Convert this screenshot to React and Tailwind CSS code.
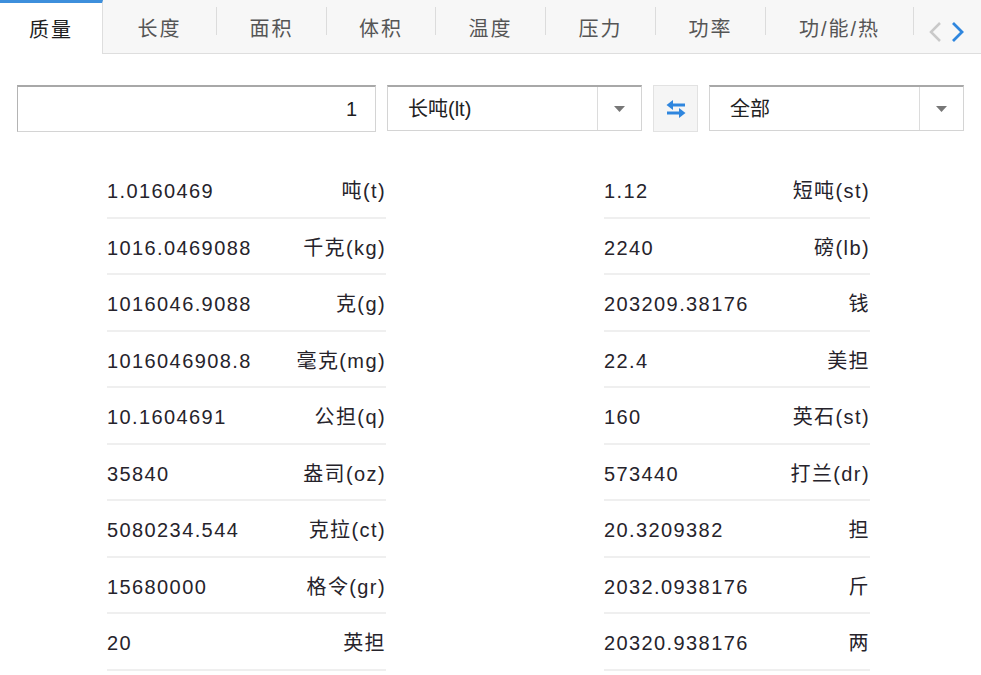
import React from "react";

const tabs = ["质量", "长度", "面积", "体积", "温度", "压力", "功率", "功/能/热"];
const tabWidths = ["w-[103px]", "w-[113px]", "w-[109px]", "w-[108px]", "w-[109px]", "w-[109px]", "w-[109px]", "w-[147px]"];

const left = [
  ["1.0160469", "吨(t)"],
  ["1016.0469088", "千克(kg)"],
  ["1016046.9088", "克(g)"],
  ["1016046908.8", "毫克(mg)"],
  ["10.1604691", "公担(q)"],
  ["35840", "盎司(oz)"],
  ["5080234.544", "克拉(ct)"],
  ["15680000", "格令(gr)"],
  ["20", "英担"],
];

const right = [
  ["1.12", "短吨(st)"],
  ["2240", "磅(lb)"],
  ["203209.38176", "钱"],
  ["22.4", "美担"],
  ["160", "英石(st)"],
  ["573440", "打兰(dr)"],
  ["20.3209382", "担"],
  ["2032.0938176", "斤"],
  ["20320.938176", "两"],
];

const Caret = () => (
  <svg width="11" height="6" viewBox="0 0 11 6">
    <path d="M0 0 L11 0 L5.5 6 Z" fill="#777" />
  </svg>
);

const Select = ({ label }) => (
  <div className="flex h-[46px] w-[255px] border border-[#d4d4d4] border-t-2 border-t-[#a8a8a8] bg-white">
    <div className="flex flex-1 items-center pl-[20px] text-[20px] text-[#222]">{label}</div>
    <div className="flex w-[44px] items-center justify-center border-l border-[#dcdcdc]">
      <Caret />
    </div>
  </div>
);

const Row = ({ value, unit }) => (
  <div className="flex h-[56.5px] items-center justify-between border-b-2 border-[#efefef] pt-[4px]">
    <span>{value}</span>
    <span>{unit}</span>
  </div>
);

export default function App() {
  return (
    <div
      className="h-[675px] w-[981px] overflow-hidden bg-white"
      style={{ fontFamily: '"Liberation Sans", "Noto Sans CJK SC", sans-serif' }}
    >
      {/* tab bar */}
      <div className="flex h-[54px] items-stretch border-b border-[#dedede] bg-[#f7f7f7]">
        {tabs.map((t, i) => (
          <React.Fragment key={t}>
            {i === 0 ? (
              <div className={`${tabWidths[i]} -mb-px flex items-center justify-center border-r border-[#dedede] border-t-[3px] border-t-[#3d8fdc] bg-white pt-[2px] text-[20px] tracking-[2px] text-[#1e1e1e]`}>
                {t}
              </div>
            ) : (
              <div className={`${tabWidths[i]} flex items-center justify-center pt-[5px] text-[20px] tracking-[2px] text-[#555]`}>
                {t}
              </div>
            )}
            {i > 0 && <div className="mt-[7px] h-[28px] w-px bg-[#dcdcdc]" />}
          </React.Fragment>
        ))}
        <div className="flex items-center gap-[9px] pl-[14px] pt-[10px]">
          <svg width="14" height="22" viewBox="0 0 14 22">
            <path d="M12 2 L3 11 L12 20" fill="none" stroke="#c9c9c9" strokeWidth="2.5" />
          </svg>
          <svg width="14" height="22" viewBox="0 0 14 22">
            <path d="M2 2 L11 11 L2 20" fill="none" stroke="#2f86de" strokeWidth="2.8" />
          </svg>
        </div>
      </div>

      {/* input row */}
      <div className="mt-[31px] flex items-start pl-[17px]">
        <div className="flex h-[47px] w-[359px] items-center justify-end border border-[#d4d4d4] border-t-2 border-t-[#a8a8a8] border-l-[#b4b4b4] pr-[18px] text-[20px] text-[#1e1e1e]">
          1
        </div>
        <div className="ml-[11px]">
          <Select label="长吨(lt)" />
        </div>
        <div className="ml-[11px] flex h-[47px] w-[45px] items-center justify-center border border-[#e2e2e2] bg-[#f5f5f5]">
          <svg width="22" height="20" viewBox="0 0 22 20">
            <path d="M20 6 H5" stroke="#2f86de" strokeWidth="3" fill="none" />
            <path d="M8 1 L1.5 6 L8 11 Z" fill="#2f86de" />
            <path d="M2 14 H17" stroke="#2f86de" strokeWidth="3" fill="none" />
            <path d="M14 9 L20.5 14 L14 19 Z" fill="#2f86de" />
          </svg>
        </div>
        <div className="ml-[11px]">
          <Select label="全部" />
        </div>
      </div>

      {/* results */}
      <div className="mt-[30px] flex pl-[107px] text-[20px] tracking-[1.4px] text-[#26232b]">
        <div className="w-[279px]">
          {left.map(([v, u]) => (
            <Row key={u} value={v} unit={u} />
          ))}
        </div>
        <div className="ml-[218px] w-[266px]">
          {right.map(([v, u]) => (
            <Row key={u} value={v} unit={u} />
          ))}
        </div>
      </div>
    </div>
  );
}
